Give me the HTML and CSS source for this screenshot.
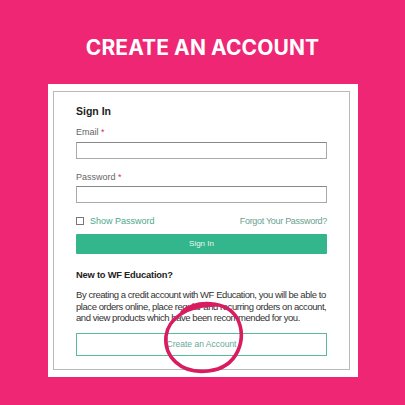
FILE: index.html
```html
<!DOCTYPE html>
<html>
<head>
<meta charset="utf-8">
<link rel="stylesheet" href="styles.css">
</head>
<body>
<div class="page">
  <h1 class="title">CREATE AN ACCOUNT</h1>
  <div class="card">
    <div class="panel">
      <div class="heading">Sign In</div>
      <div class="label">Email <span class="req">*</span></div>
      <div class="input"></div>
      <div class="label label-pw">Password <span class="req">*</span></div>
      <div class="input input-pw"></div>
      <div class="opts">
        <span class="show"><span class="check"></span>Show Password</span>
        <span class="forgot">Forgot Your Password?</span>
      </div>
      <div class="btn-primary">Sign In</div>
      <div class="heading heading-new">New to WF Education?</div>
      <p class="desc">By creating a credit account with WF Education, you will be able to place orders online, place regular and recurring orders on account, and view products which have been recommended for you.</p>
      <div class="btn-outline">Create an Account</div>
    </div>
  </div>
  <svg class="circle" width="90" height="80" viewBox="0 0 90 80">
    <path d="M24 14 C38 2, 68 2, 79 20 C90 40, 80 70, 50 73 C22 76, 6 58, 8 38 C10 22, 28 6, 60 7" fill="none" stroke="#d81c5f" stroke-width="3.6" stroke-linecap="round"/>
  </svg>
</div>
</body>
</html>
```
FILE: styles.css
```css
html, body {
  margin: 0;
  padding: 0;
}
body {
  background: #ee2674;
  width: 405px;
  height: 405px;
  overflow: hidden;
}
.page {
  position: relative;
  padding-top: 37px;
}
.title {
  margin: 0;
  text-align: center;
  color: #fff;
  font-family: Inter, "Liberation Sans", sans-serif;
  font-weight: 700;
  font-size: 21px;
  line-height: 22px;
  letter-spacing: 0.1px;
}
.card {
  width: 310px;
  margin: 25px 0 0 48px;
  background: #fff;
  padding: 7px 8px 7px 5px;
  box-sizing: border-box;
}
.panel {
  border: 1px solid #b9b9b9;
  padding: 12px 22px 13px 22px;
  font-family: "Liberation Sans", Arial, sans-serif;
  color: #333;
}
.heading {
  font-weight: 700;
  font-size: 10.5px;
  line-height: 14px;
  color: #222;
}
.label {
  margin-top: 8px;
  font-size: 9px;
  line-height: 12px;
  color: #666;
}
.label-pw {
  margin-top: 12px;
}
.req {
  color: #e0304a;
}
.input {
  margin-top: 4px;
  height: 17px;
  border: 1px solid #a9a9a9;
  border-top-color: #888;
  box-sizing: border-box;
}
.input-pw {
  margin-top: 3px;
}
.opts {
  margin-top: 12px;
  display: flex;
  justify-content: space-between;
  align-items: center;
  font-size: 9px;
  line-height: 12px;
}
.show {
  display: flex;
  align-items: center;
  color: #4fa88c;
}
.check {
  width: 6px;
  height: 6px;
  border: 1px solid #777;
  margin-right: 6px;
}
.forgot {
  color: #6a9f90;
  letter-spacing: -0.3px;
}
.btn-primary {
  margin-top: 7px;
  height: 20px;
  background: #33b68c;
  color: #e8f7f1;
  font-size: 8px;
  line-height: 20px;
  text-align: center;
  border-radius: 1px;
}
.heading-new {
  margin-top: 14px;
  font-size: 9.3px;
  letter-spacing: -0.2px;
}
.desc {
  margin: 7px 0 0;
  font-size: 9.5px;
  line-height: 11.5px;
  letter-spacing: -0.45px;
  color: #333;
}
.btn-outline {
  margin-top: 9px;
  height: 23px;
  border: 1px solid #5abb9b;
  box-sizing: border-box;
  color: #6aa897;
  font-size: 8.5px;
  line-height: 21px;
  text-align: center;
}
.circle {
  position: absolute;
  left: 158px;
  top: 298px;
}
```
